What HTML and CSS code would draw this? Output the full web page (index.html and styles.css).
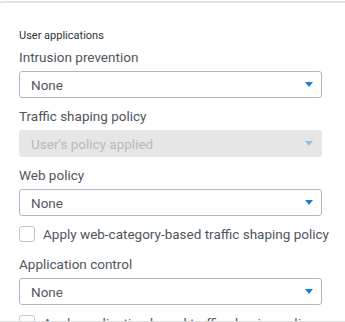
FILE: index.html
```html
<!DOCTYPE html>
<html lang="en">
<head>
    <meta charset="UTF-8">
    <title>User applications</title>
    <link rel="stylesheet" href="styles.css">
</head>
<body>
    <div class="panel">
        <div class="panel-body">
            <h4 class="group-title">User applications</h4>

            <div class="field">
                <label>Intrusion prevention</label>
                <div class="select"><span>None</span><i class="caret"></i></div>
            </div>

            <div class="field">
                <label>Traffic shaping policy</label>
                <div class="select disabled"><span>User's policy applied</span><i class="caret"></i></div>
            </div>

            <div class="field">
                <label>Web policy</label>
                <div class="select"><span>None</span><i class="caret"></i></div>
            </div>

            <div class="check">
                <span class="box"></span>
                <span>Apply web-category-based traffic shaping policy</span>
            </div>

            <div class="field">
                <label>Application control</label>
                <div class="select"><span>None</span><i class="caret"></i></div>
            </div>

            <div class="check">
                <span class="box"></span>
                <span>Apply application-based traffic shaping policy</span>
            </div>
        </div>
    </div>
    <div class="footer"></div>
</body>
</html>
```

FILE: styles.css
```css
body {
    margin: 0;
    padding: 0;
    background-color: #fff;
    font-family: Roboto, "Liberation Sans", sans-serif;
    color: #50565d;
    width: 345px;
    height: 322px;
    overflow: hidden;
}
.panel {
    margin: 1px -3px 0 -1px;
    height: 318px;
    border-top: 2px solid #e2e2e2;
    border-radius: 4px 4px 0 0;
    overflow: hidden;
}
.panel-body {
    padding: 26px 26px 0 20px;
}
.group-title {
    margin: 0 0 6px;
    font-size: 11px;
    font-weight: 400;
    color: #2f3338;
    line-height: 14px;
}
.field {
    margin-bottom: 10px;
}
.field label {
    display: block;
    font-size: 13.5px;
    line-height: 16px;
    margin-bottom: 6px;
}
.select {
    height: 25px;
    border: 1px solid #b3b6ba;
    border-radius: 3px;
    display: flex;
    align-items: center;
    justify-content: space-between;
    padding: 0 8px 0 11px;
    font-size: 13.5px;
    color: #55595e;
}
.select.disabled {
    background-color: #e6e6e6;
    border-color: #e6e6e6;
    color: #b9b9b9;
}
.caret {
    width: 0;
    height: 0;
    border-left: 4px solid transparent;
    border-right: 4px solid transparent;
    border-top: 5px solid #1a7dd1;
}
.select.disabled .caret {
    border-top-color: #8fc0ea;
}
.check {
    display: flex;
    align-items: center;
    gap: 8px;
    height: 16px;
    font-size: 13.5px;
    white-space: nowrap;
    margin: 2px -20px 14px 0;
}
.check .box {
    width: 14px;
    height: 14px;
    border: 1px solid #c4c7ca;
    border-radius: 3px;
    flex: none;
}
.footer {
    border-top: 1px solid #dcdcdc;
    height: 3px;
    background-color: #fff;
}
```
